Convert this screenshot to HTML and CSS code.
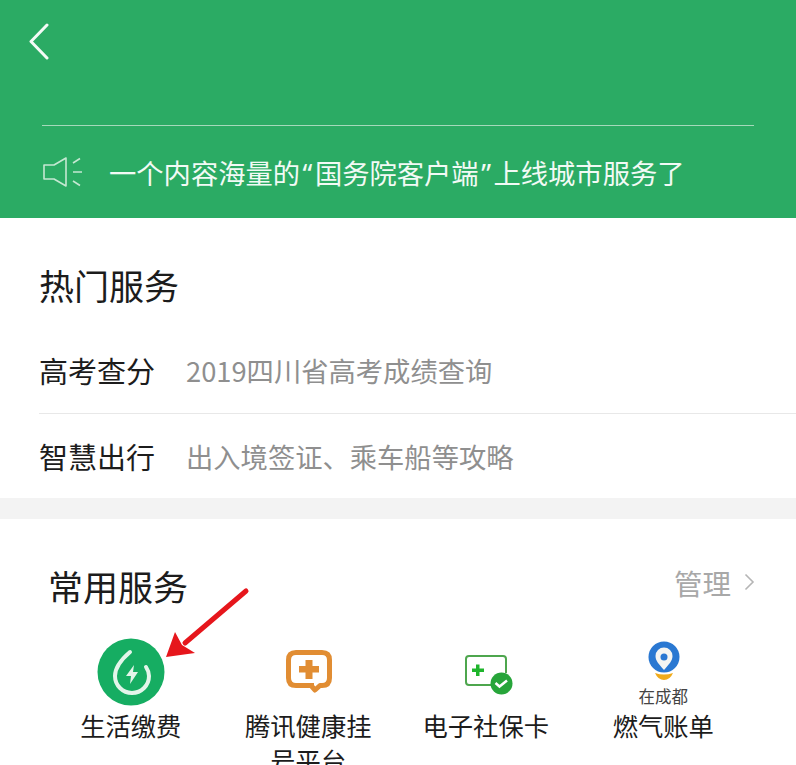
FILE: index.html
```html
<!DOCTYPE html>
<html lang="zh-CN">
<head>
  <meta charset="UTF-8">
  <meta name="viewport" content="width=device-width, initial-scale=1.0">
  <title>城市服务</title>
  <link rel="stylesheet" href="styles.css">
</head>
<body>
  <div class="page">

    <!-- Green header -->
    <header class="top-bar">
      <svg class="back-icon" width="24" height="38" viewBox="0 0 24 38">
        <path d="M19 2 L3 18.500 L19 35" fill="none" stroke="#f4faf6" stroke-width="3" stroke-linecap="round" stroke-linejoin="round"/>
      </svg>
      <div class="notice">
        <svg class="notice-icon" width="42" height="32" viewBox="0 0 42 32">
          <path d="M2 9 H12 L24 2 V30 L12 23 H2 Z" fill="none" stroke="#c5e8d2" stroke-width="1.6" stroke-linejoin="round"/>
          <path d="M31 7 L38 2.500 M31 16 H40 M31 25 L38 29.500" fill="none" stroke="#c5e8d2" stroke-width="1.6"/>
        </svg>
        <span class="notice-text">一个内容海量的<span class="quote">“</span>国务院客户端<span class="quote">”</span>上线城市服务了</span>
      </div>
    </header>

    <!-- Hot services -->
    <section class="hot">
      <h2 class="hot-title">热门服务</h2>
      <div class="hot-row">
        <span class="hot-name">高考查分</span>
        <span class="hot-value">2019四川省高考成绩查询</span>
      </div>
      <div class="hot-row">
        <span class="hot-name">智慧出行</span>
        <span class="hot-value">出入境签证、乘车船等攻略</span>
      </div>
    </section>

    <!-- Common services -->
    <section class="common">
      <div class="common-head">
        <h2 class="common-title">常用服务</h2>
        <span class="manage">管理
          <svg class="manage-arrow" width="11" height="18" viewBox="0 0 11 18">
            <path d="M1.500 1.500 L9 9 L1.500 16.500" fill="none" stroke="#b5b5b5" stroke-width="1.600"/>
          </svg>
        </span>
      </div>
      <div class="service-grid">
        <div class="service">
          <div class="service-icon">
            <svg width="68" height="68" viewBox="0 0 68 68">
              <circle cx="34" cy="34" r="33.500" fill="#16ad62"/>
              <path d="M33 14 C26 20 18 28 18 38 A17 17 0 0 0 52 38 C52 35 51 32 49 29" fill="none" stroke="#e3f5ea" stroke-width="4" stroke-linecap="round"/>
              <path d="M37 27 L29 38 H34 L33 46 L41 34 H36 Z" fill="#e3f5ea"/>
            </svg>
          </div>
          <div class="service-name">生活缴费</div>
        </div>
        <div class="service">
          <div class="service-icon">
            <svg class="health-icon" width="46" height="44" viewBox="0 0 46 44">
              <path d="M28 35.500 H10 Q2.500 35.500 2.500 28 V10 Q2.500 2.500 10 2.500 H36 Q43.500 2.500 43.500 10 V28 Q43.500 35.500 36 35.500 H34 L29 40 L25 35.500" fill="none" stroke="#e18d33" stroke-width="5" stroke-linejoin="round"/>
              <path d="M19.500 10 H26.500 V16 H33 V22.500 H26.500 V29 H19.500 V22.500 H13 V16 H19.500 Z" fill="#e18d33"/>
            </svg>
          </div>
          <div class="service-name">腾讯健康挂号平台</div>
        </div>
        <div class="service">
          <div class="service-icon">
            <svg width="54" height="50" viewBox="-6 -8 54 50">
              <path d="M27 30 H4 Q1 30 1 27 V4 Q1 1 4 1 H38 Q41 1 41 4 V18" fill="none" stroke="#4ea64e" stroke-width="2"/>
              <path d="M11 9.500 H14.500 V13.500 H19 V17 H14.500 V21 H11 V17 H7 V13.500 H11 Z" fill="#1fb52c"/>
              <circle cx="36.500" cy="28.500" r="11" fill="#27a53a"/>
              <path d="M30.500 28 L34.500 31.500 L42 25.500" fill="none" stroke="#fff" stroke-width="2.500"/>
            </svg>
          </div>
          <div class="service-name">电子社保卡</div>
        </div>
        <div class="service">
          <div class="service-icon service-icon-city">
            <svg class="city-icon" width="32" height="40" viewBox="0 0 32 40">
              <circle cx="16" cy="16" r="15.500" fill="#2a78d2"/>
              <path d="M16 29 C11 23 7.500 20 7.500 15 A8.500 8.500 0 0 1 24.500 15 C24.500 20 21 23 16 29 Z" fill="#f5f5f2"/>
              <circle cx="16" cy="16" r="3.500" fill="#2a78d2"/>
              <path d="M7 32 Q16 35 25 32 Q22 39 16 39 Q10 39 7 32 Z" fill="#f0ab1c"/>
            </svg>
            <span class="city-label">在成都</span>
          </div>
          <div class="service-name">燃气账单</div>
        </div>
      </div>

      <!-- Red annotation arrow -->
      <svg class="red-arrow" width="90" height="80" viewBox="0 0 90 80">
        <path d="M83 8 L22 60" fill="none" stroke="#e6161c" stroke-width="5" stroke-linecap="round"/>
        <path d="M3 74 L12 49 L19 62 L32 70 Z" fill="#e6161c"/>
      </svg>
    </section>

  </div>
</body>
</html>
```

FILE: styles.css
```css
/* Basic Reset */
* {
  margin: 0;
  padding: 0;
  box-sizing: border-box;
}

body {
  font-family: "Noto Sans CJK SC", "Noto Sans", sans-serif;
  background: #fff;
  color: #1c1c1c;
}

.page {
  width: 796px;
  height: 765px;
  overflow: hidden;
  background: #f3f3f3;
}

/* Green header */
.top-bar {
  height: 218px;
  padding: 23px 42px 0;
  background: #2bab64;
}

.back-icon {
  display: block;
  margin-left: -14px;
  height: 38px;
}

.notice {
  display: flex;
  align-items: center;
  height: 93px;
  margin-top: 64px;
  border-top: 1px solid #a5d9ba;
}

.notice-icon {
  margin-right: 25px;
}

.notice-text {
  color: #f2faf5;
  font-size: 27.3px;
  white-space: nowrap;
}

.quote {
  font-family: "Noto Sans", sans-serif;
  padding: 0 2.5px;
}

/* Hot services */
.hot {
  height: 280px;
  padding: 42px 0 0 39px;
  background: #fff;
}

.hot-title {
  margin-bottom: 16px;
  font-size: 35px;
  font-weight: 400;
  line-height: 50px;
}

.hot-row {
  display: flex;
  align-items: center;
  height: 87px;
}

.hot-row + .hot-row {
  height: 85px;
  border-top: 1px solid #e8e8e8;
}

.hot-name {
  width: 147px;
  font-size: 29px;
}

.hot-value {
  color: #8f8f8f;
  font-size: 27.3px;
}

/* Common services */
.common {
  position: relative;
  height: 246px;
  margin-top: 21px;
  background: #fff;
}

.common-head {
  display: flex;
  align-items: center;
  justify-content: space-between;
  padding: 42px 41px 0 48px;
}

.common-title {
  font-size: 35px;
  font-weight: 400;
  line-height: 50px;
}

.manage {
  display: flex;
  align-items: center;
  gap: 13px;
  margin-top: -8px;
  color: #a8a8a8;
  font-size: 28.5px;
}

.service-grid {
  display: grid;
  grid-template-columns: repeat(4, 177.500px);
  margin-top: 27px;
  padding-left: 42px;
}

.service {
  display: flex;
  flex-direction: column;
  align-items: center;
}

.service-icon {
  display: flex;
  flex-direction: column;
  align-items: center;
  justify-content: center;
  height: 68px;
}

.health-icon {
  margin-left: 2px;
}

.service-icon-city {
  justify-content: flex-start;
  padding-top: 3px;
}

.city-icon {
  margin-left: 2px;
}

.city-label {
  margin-top: 6px;
  color: #444;
  font-size: 16.500px;
  line-height: 18px;
  white-space: nowrap;
}

.service-name {
  width: 130px;
  margin-top: 2px;
  font-size: 25.300px;
  line-height: 35px;
  text-align: center;
}

.red-arrow {
  position: absolute;
  left: 163px;
  top: 64px;
}
```
